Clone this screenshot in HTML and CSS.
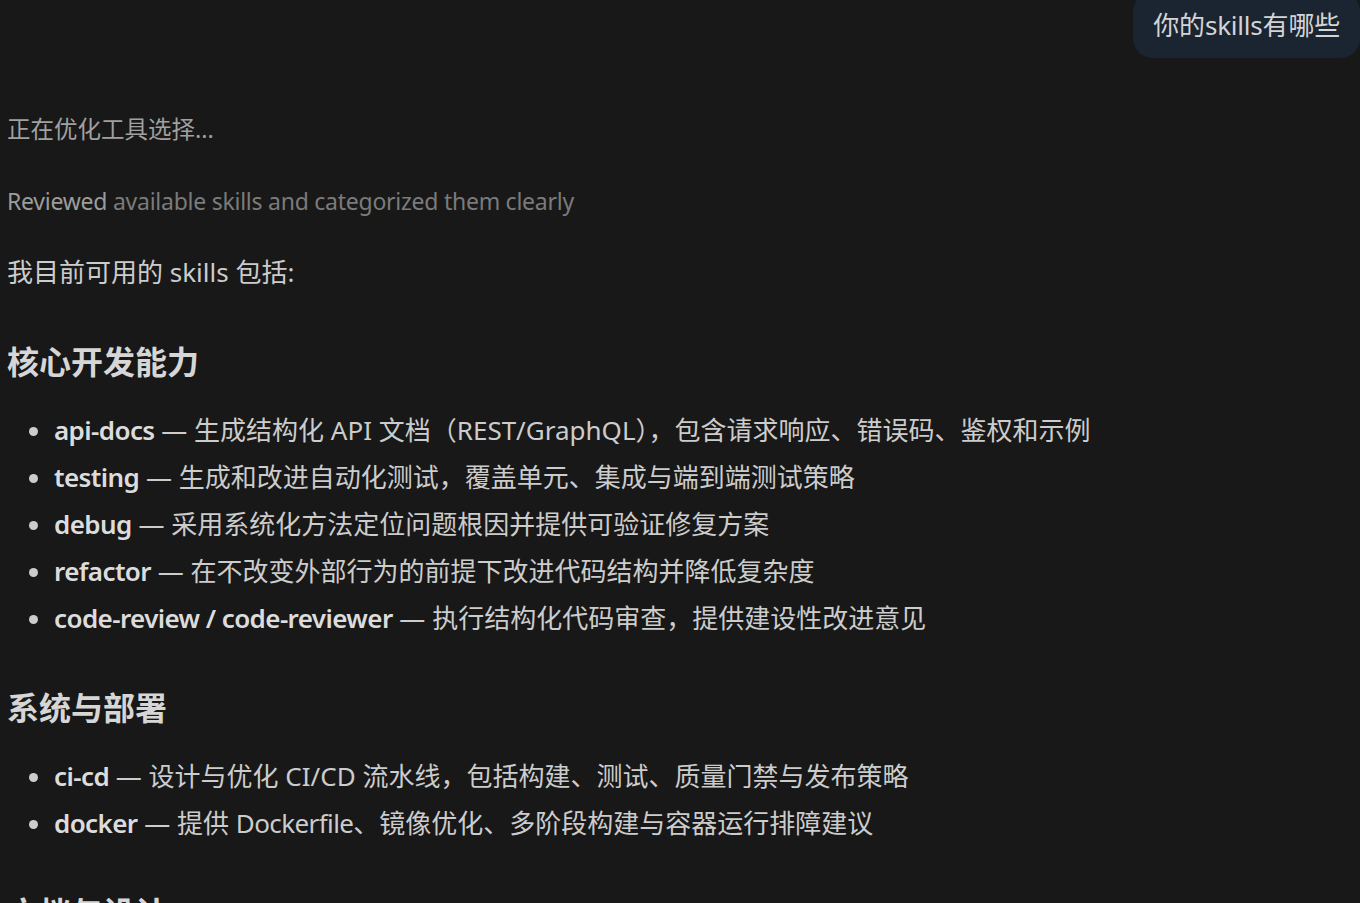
FILE: index.html
```html
<!DOCTYPE html>
<html lang="zh-CN">
<head>
<meta charset="utf-8">
<title>Chat</title>
<link rel="stylesheet" href="styles.css">
</head>
<body>
<main class="chat">
  <div class="user-row">
    <div class="bubble">你的skills有哪些</div>
  </div>

  <p class="thinking">正在优化工具选择...</p>
  <p class="summary"><span class="summary-lead">Reviewed</span> available skills and categorized them clearly</p>

  <div class="answer">
    <p>我目前可用的 skills 包括:</p>

    <h3>核心开发能力</h3>
    <ul>
      <li><strong>api-docs</strong> — 生成结构化 API 文档（REST/GraphQL），包含请求响应、错误码、鉴权和示例</li>
      <li><strong>testing</strong> — 生成和改进自动化测试，覆盖单元、集成与端到端测试策略</li>
      <li><strong>debug</strong> — 采用系统化方法定位问题根因并提供可验证修复方案</li>
      <li><strong>refactor</strong> — 在不改变外部行为的前提下改进代码结构并降低复杂度</li>
      <li><strong>code-review / code-reviewer</strong> — 执行结构化代码审查，提供建设性改进意见</li>
    </ul>

    <h3>系统与部署</h3>
    <ul>
      <li><strong>ci-cd</strong> — 设计与优化 CI/CD 流水线，包括构建、测试、质量门禁与发布策略</li>
      <li><strong>docker</strong> — 提供 <span class="latin">Dockerfile</span>、镜像优化、多阶段构建与容器运行排障建议</li>
    </ul>

    <h3>文档与设计</h3>
  </div>
</main>
</body>
</html>
```

FILE: styles.css
```css
html, body {
  margin: 0;
  padding: 0;
  background: #181818;
  height: 100%;
  overflow: hidden;
}

body {
  font-family: "Noto Sans", "Noto Sans CJK SC", sans-serif;
  color: #cccccc;
}

.chat {
  padding: 0 7px;
}

.user-row {
  display: flex;
  justify-content: flex-end;
  margin: -8px -7px 0 0;
}

.bubble {
  background: #1b2531;
  color: #d4d4d4;
  font-size: 26px;
  line-height: 36px;
  padding: 15px 20px 15px 20px;
  border-radius: 20px;
  letter-spacing: -0.2px;
}

.thinking,
.summary {
  margin: 0;
  font-size: 23px;
  line-height: 47px;
}

.thinking {
  margin-top: 48px;
  color: #a0a0a0;
  font-size: 23.5px;
}

.summary {
  margin-top: 25px;
  color: #7b7b7b;
  letter-spacing: -0.25px;
}

.summary-lead {
  color: #9c9c9c;
}

.answer {
  margin-top: 24px;
  font-size: 26px;
  line-height: 47px;
}

.answer p {
  margin: 0;
}

.answer h3 {
  font-size: 32px;
  line-height: 40px;
  font-weight: 700;
  color: #d6d6d6;
  margin: 46px 0 25px;
}

.answer ul {
  margin: 0;
  padding-left: 47px;
}

.answer li::marker {
  color: #cccccc;
}

.answer strong {
  font-weight: 600;
  color: #dcdcdc;
  letter-spacing: -0.6px;
}

.latin {
  letter-spacing: -0.6px;
}
```
